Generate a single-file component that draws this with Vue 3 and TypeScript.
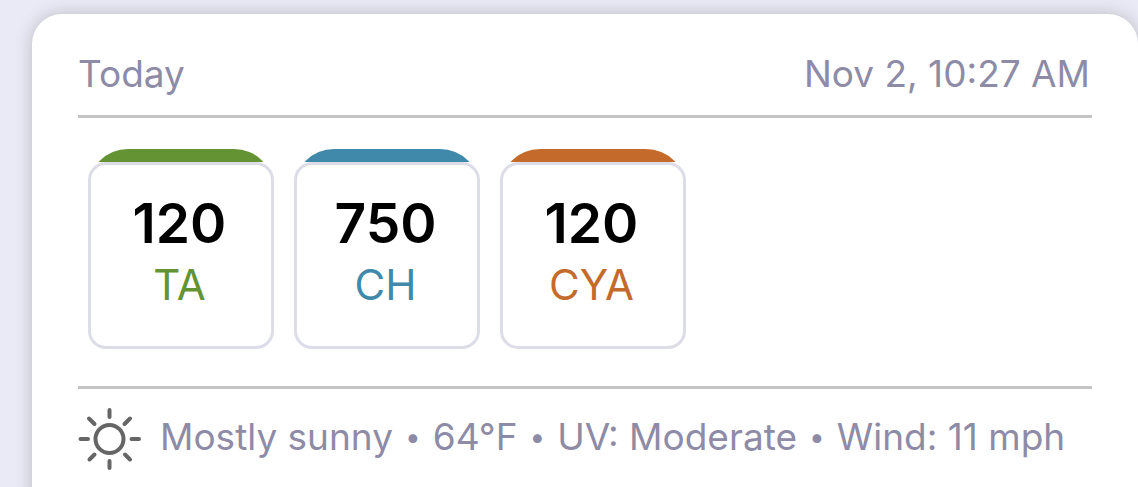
<script setup lang="ts">
interface Reading {
  value: number
  label: string
  tone: string
}

const readings: Reading[] = [
  { value: 120, label: 'TA', tone: 'green' },
  { value: 750, label: 'CH', tone: 'blue' },
  { value: 120, label: 'CYA', tone: 'orange' },
]

const weather: string[] = ['Mostly sunny', '64°F', 'UV: Moderate', 'Wind: 11 mph']
</script>

<template>
  <main class="page">
    <article class="card">
      <header class="heading">
        <span>Today</span>
        <time>Nov 2, 10:27 AM</time>
      </header>

      <ul class="readings">
        <li v-for="r in readings" :key="r.label" class="reading" :class="r.tone">
          <div class="tile">
            <strong class="value">{{ r.value }}</strong>
            <span class="label">{{ r.label }}</span>
          </div>
        </li>
      </ul>

      <footer class="weather">
        <svg class="sun" viewBox="0 0 64 64" aria-hidden="true">
          <circle cx="31.5" cy="32" r="14" />
          <path d="M31.5 3v7M31.5 54v7M2.5 32h7.5M53.5 32h7.5M11 11.5l5.5 5.5M47 47.5l5 5M52 11.5l-5.5 5.5M16.5 47.5l-5 5" />
        </svg>
        <p class="conditions">
          <template v-for="(item, i) in weather" :key="item">
            <span v-if="i > 0" class="dot">•</span>
            <span>{{ item }}</span>
          </template>
        </p>
      </footer>
    </article>
  </main>
</template>

<style>
body {
  margin: 0;
  background: #e9eaf5;
}
</style>

<style scoped>
.page {
  box-sizing: border-box;
  height: 100vh;
  overflow: hidden;
  padding: 14px 0 0 32px;
  font-family: Inter, "Liberation Sans", sans-serif;
  font-size: 37px;
  line-height: 46px;
  color: #8e8ba7;
}

.card {
  box-sizing: border-box;
  min-height: 100vh;
  padding: 37px 46px 32px;
  border-radius: 30px 30px 0 0;
  background: #fff;
  box-shadow: 0 0 18px rgba(0, 0, 0, 0.2);
}

.heading {
  display: flex;
  justify-content: space-between;
  padding: 0 2px 18px 0;
  border-bottom: 3px solid #c5c5c5;
}

.readings {
  display: flex;
  flex-wrap: wrap;
  gap: 20px;
  margin: 0;
  padding: 31px 10px 37px;
  list-style: none;
}

.reading {
  padding-top: 13px;
  border-radius: 40px 40px 0 0;
  background: linear-gradient(currentColor 13px, transparent 13px);
}

.green {
  color: #649333;
}

.blue {
  color: #4089aa;
}

.orange {
  color: #c46b2b;
}

.tile {
  box-sizing: border-box;
  display: flex;
  flex-direction: column;
  align-items: center;
  width: 186px;
  height: 187px;
  padding: 26px 3px 0 0;
  border: 3px solid #dddde8;
  border-radius: 18px;
  background: #fff;
}

.value {
  font-size: 55px;
  font-weight: 600;
  line-height: 64px;
  color: #000;
}

.label {
  font-size: 42px;
  line-height: 60px;
}

.weather {
  display: flex;
  align-items: center;
  gap: 18px;
  padding-top: 18px;
  border-top: 3px solid #c5c5c5;
  white-space: nowrap;
}

.conditions {
  display: flex;
  align-items: center;
  gap: 12px;
  margin: 0;
  padding-bottom: 4px;
}

.dot {
  font-size: 28px;
}

.sun {
  flex: none;
  width: 64px;
  height: 64px;
  fill: none;
  stroke: #666;
  stroke-width: 4;
  stroke-linecap: round;
}
</style>
